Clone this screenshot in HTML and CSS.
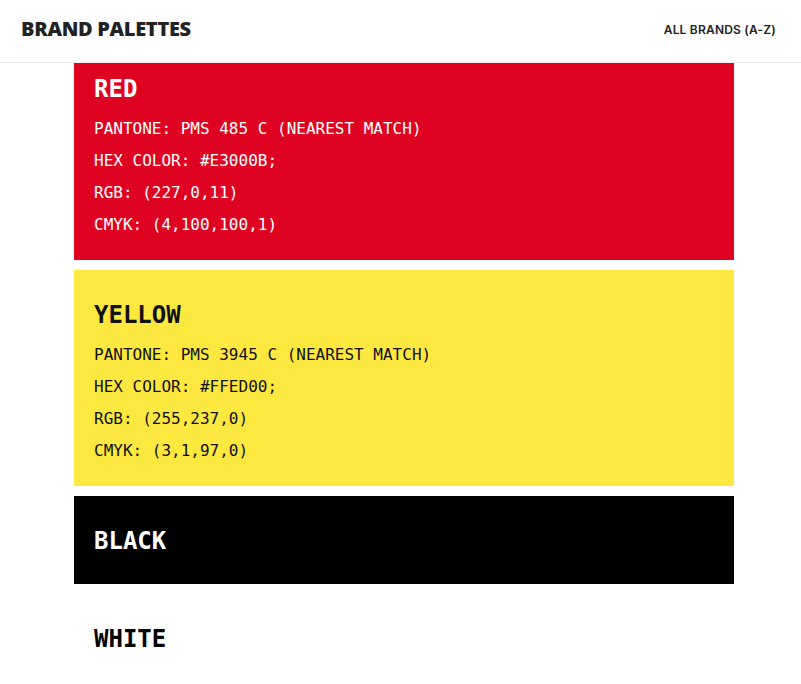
FILE: index.html
```html
<!DOCTYPE html>
<html lang="en">
<head>
<meta charset="utf-8">
<title>Brand Palettes</title>
<link rel="stylesheet" href="styles.css">
</head>
<body>
<header class="site-header">
  <div class="logo">BRAND PALETTES</div>
  <nav class="nav"><a class="nav-link" href="#">ALL BRANDS (A-Z)</a></nav>
</header>
<main class="palette">
  <section class="swatch swatch--red swatch--first">
    <h2 class="swatch-name">RED</h2>
    <p class="swatch-line">PANTONE: PMS 485 C (NEAREST MATCH)</p>
    <p class="swatch-line">HEX COLOR: #E3000B;</p>
    <p class="swatch-line">RGB: (227,0,11)</p>
    <p class="swatch-line">CMYK: (4,100,100,1)</p>
  </section>
  <section class="swatch swatch--yellow">
    <h2 class="swatch-name">YELLOW</h2>
    <p class="swatch-line">PANTONE: PMS 3945 C (NEAREST MATCH)</p>
    <p class="swatch-line">HEX COLOR: #FFED00;</p>
    <p class="swatch-line">RGB: (255,237,0)</p>
    <p class="swatch-line">CMYK: (3,1,97,0)</p>
  </section>
  <section class="swatch swatch--black">
    <h2 class="swatch-name">BLACK</h2>
  </section>
  <section class="swatch swatch--white">
    <h2 class="swatch-name">WHITE</h2>
  </section>
</main>
</body>
</html>
```
FILE: styles.css
```css
html, body {
  margin: 0;
  padding: 0;
  background: #fff;
}
body {
  font-family: "Roboto", "Liberation Sans", sans-serif;
  overflow: hidden;
}
.site-header {
  display: flex;
  align-items: center;
  justify-content: space-between;
  height: 56px;
  padding: 0 25px 6px 21px;
  border-bottom: 1px solid #ececec;
}
.logo {
  font-family: "Open Sans", "Inter", sans-serif;
  font-weight: 800;
  font-size: 20px;
  letter-spacing: -0.3px;
  color: #222;
}
.nav-link {
  font-family: "Inter", "Open Sans", sans-serif;
  font-weight: 600;
  font-size: 12px;
  color: #222;
  text-decoration: none;
  letter-spacing: 0.2px;
}
.palette {
  display: flex;
  flex-direction: column;
  gap: 10px;
  width: 660px;
  margin-left: 74px;
}
.swatch {
  padding: 29px 20px 19px;
  font-family: "DejaVu Sans Mono", "Liberation Mono", monospace;
}
.swatch--first {
  padding-top: 10px;
}
.swatch--red {
  background: #de0421;
  color: #fff;
}
.swatch--yellow {
  background: #fde83f;
  color: #111;
}
.swatch--black {
  background: #000;
  color: #fff;
}
.swatch--white {
  background: #fff;
  color: #000;
}
.swatch-name {
  margin: 0 0 8px;
  font-size: 24px;
  line-height: 32px;
  font-weight: 700;
}
.swatch-line {
  margin: 0;
  font-size: 16px;
  line-height: 32px;
}
```
